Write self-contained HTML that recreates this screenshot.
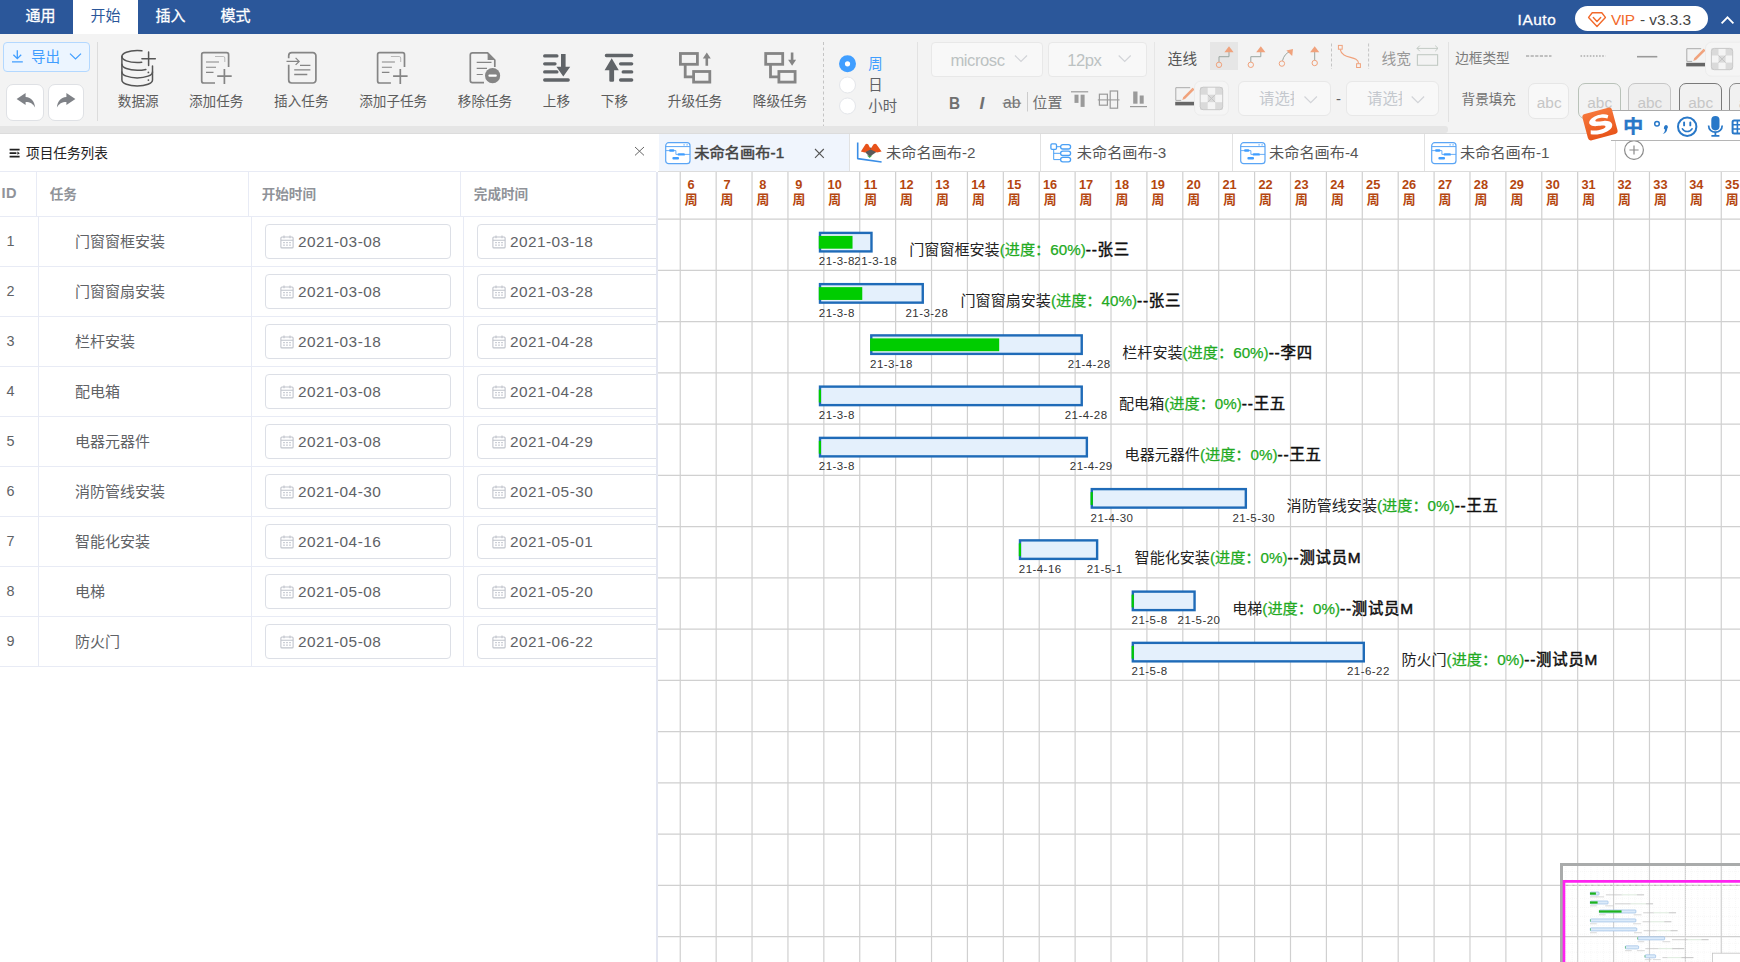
<!DOCTYPE html>
<html lang="zh-CN"><head><meta charset="utf-8"><title>IAuto</title><style>
*{box-sizing:border-box;margin:0;padding:0}
html,body{width:1740px;height:962px;overflow:hidden;background:#fff}
body{font-family:"Liberation Sans","Noto Sans CJK SC",sans-serif;color:#333;position:relative;font-size:14px}
.abs{position:absolute}
.t{position:absolute;white-space:nowrap;line-height:1}
#topbar{position:absolute;left:0;top:0;width:1740px;height:34px;background:#2b579a}
#topbar .tab{position:absolute;top:0;height:34px;width:65px;text-align:center;line-height:32px;color:#fff;font-size:15px;-webkit-text-stroke:.3px #fff}
#topbar .tab.on{background:#fff;color:#2b579a;-webkit-text-stroke:0}
#toolbar{position:absolute;left:0;top:34px;width:1740px;height:92px;background:#f3f3f3}
#hscroll{position:absolute;left:0;top:126px;width:1740px;height:8px;background:#f3f3f3;border-bottom:1px solid #dcdcdc}
#hscroll i{position:absolute;left:0;top:0;width:1448px;height:6.8px;background:#e5e5e5;border-radius:0 3px 3px 0}
.lbl{position:absolute;white-space:nowrap;font-size:13.6px;color:#5c5c5c;line-height:16px;text-align:center;transform:translateX(-50%)}
.vdiv{position:absolute;width:1px;background:#dcdcdc}
.sel{position:absolute;background:#f8f8f8;border:1px solid #e8e8e8;border-radius:4px;color:#c0c4cc;overflow:hidden}
#left{position:absolute;left:0;top:134px;width:656.4px;height:828px;background:#fff;overflow:hidden}
#canvas{position:absolute;left:658px;top:172px;width:1082px;height:790px;background:#fff;overflow:hidden}
#tabs{position:absolute;left:658px;top:134px;width:1082px;height:38px;background:#fff;border-bottom:1px solid #dcdcdc}
.ctab{position:absolute;top:0;height:37px;border-right:1px solid #e2e2e2;font-size:15px;color:#555}
.hdr{position:absolute;font-weight:bold;color:#909399;font-size:13.6px;white-space:nowrap;line-height:16px}
.cell{position:absolute;font-size:14.6px;color:#606266;white-space:nowrap;line-height:18px}
.inp{position:absolute;height:35px;border:1px solid #dcdfe6;border-radius:4px;background:#fff}
.inp span{position:absolute;left:32px;top:7.5px;font-size:15.4px;color:#606266;line-height:18px;white-space:nowrap;letter-spacing:.45px}
</style></head>
<body>
<div id="topbar">
<div class="tab" style="left:8px">通用</div>
<div class="tab on" style="left:73px">开始</div>
<div class="tab" style="left:138px">插入</div>
<div class="tab" style="left:203px">模式</div>
<div class="t" style="left:1517.6px;top:11.6px;font-size:15.4px;color:#fff;letter-spacing:.55px;-webkit-text-stroke:.3px #fff">IAuto</div>
<div class="abs" style="left:1575px;top:6px;width:133px;height:25px;border-radius:13px;background:#fff"></div>
<svg class="abs" style="left:1587px;top:11px" width="20" height="17" viewBox="0 0 20 17" ><path d="M5.2 1.8h9.6l3.6 4.6L10 15.4 1.6 6.4z" fill="none" stroke="#f2692a" stroke-width="1.4" stroke-linejoin="round"/><path d="M6.3 6.6L10 10.6l3.7-4" fill="none" stroke="#f2692a" stroke-width="1.4" stroke-linecap="round" stroke-linejoin="round"/></svg>
<div class="t" style="left:1611px;top:11.8px;font-size:15.4px;color:#f2692a;letter-spacing:-.4px">VIP</div>
<div class="t" style="left:1640px;top:11.8px;font-size:15.4px;color:#444;letter-spacing:-.05px">- v3.3.3</div>
<svg class="abs" style="left:1719px;top:14px" width="17" height="12" viewBox="0 0 17 12" ><path d="M2.6 9.3L8.5 3.3l5.9 6" fill="none" stroke="#fff" stroke-width="1.8"/></svg>
</div>
<div id="toolbar"></div><div id="hscroll"><i></i></div>
<div class="abs" style="left:3px;top:42px;width:87px;height:30px;background:#ecf5ff;border:1px solid #b3d8ff;border-radius:4px"></div>
<svg class="abs" style="left:10px;top:48px" width="15" height="16" viewBox="0 0 15 16" ><path d="M7.3 2.2V10.2M3.4 6.8l3.9 3.9 3.9-3.9M2 13.9H12.8" fill="none" stroke="#409eff" stroke-width="1.3"/></svg>
<div class="t" style="left:31px;top:49.8px;font-size:14.6px;color:#409eff">导出</div>
<svg class="abs" style="left:68px;top:51px" width="15" height="10" viewBox="0 0 15 10" ><path d="M2 2.6L7.5 8 13 2.6" fill="none" stroke="#409eff" stroke-width="1.2"/></svg>
<div class="abs" style="left:6px;top:84px;width:37.6px;height:36.6px;background:#fff;border:1px solid #dfe1e5;border-radius:7px"></div>
<div class="abs" style="left:48px;top:84px;width:36.4px;height:36.6px;background:#fff;border:1px solid #dfe1e5;border-radius:7px"></div>
<svg class="abs" style="left:16px;top:92px" width="20" height="17" viewBox="0 0 20 17" ><path d="M.6 7L9.6 1V4.9C15.5 5.2 18.6 9.6 19.1 15.6C17 11.8 14.2 10 9.6 10V13.1z" fill="#7f8287"/></svg>
<svg class="abs" style="left:56.4px;top:92px" width="20" height="17" viewBox="0 0 20 17" ><g transform="translate(20,0) scale(-1,1)"><path d="M.6 7L9.6 1V4.9C15.5 5.2 18.6 9.6 19.1 15.6C17 11.8 14.2 10 9.6 10V13.1z" fill="#7f8287"/></g></svg>
<div class="vdiv" style="left:97px;top:42px;height:79px"></div>
<svg class="abs" style="left:0px;top:34px" width="1740" height="92" viewBox="0 34 1740 92" ><g transform="translate(.9,.6)"><g fill="none" stroke="#555" stroke-width="1.5" stroke-linecap="round"><path d="M141 50.2Q138.8 49.9 136.3 49.9C127.8 49.9 121 52.5 121 55.9S127.8 62 136.3 62Q138.5 62 140.8 61.7"/><path d="M121 55.9V79.4C121 82.8 127.8 85.4 136.3 85.4S151.6 82.8 151.6 79.4V65.5"/><path d="M121 63.6C121 67 127.8 69.7 136.3 69.7Q141 69.7 145 68.8"/><path d="M121 71.3C121 74.7 127.8 77.3 136.3 77.3S151.6 74.7 151.6 71.3"/><path d="M141 58.2H154.4M147.7 51.5V64.9"/></g><circle cx="147.5" cy="71.8" r=".9" fill="#555"/><circle cx="147.5" cy="79.5" r=".9" fill="#555"/></g><path d="M215 83H203.7a2 2 0 0 1-2-2V54.7a2 2 0 0 1 2-2H226.6a2 2 0 0 1 2 2V67" fill="none" stroke="#858585" stroke-width="1.7"/><path d="M206 62H219M206 67.2H216M206 72.4H213.5" stroke="#858585" stroke-width="1.1"/><path d="M215 56.5H223.3a1.5 1.5 0 0 1 1.5 1.5V62" fill="none" stroke="#aaa" stroke-width=".8"/><path d="M217.2 76.2H231.7M224.4 69V83.9" stroke="#858585" stroke-width="1.7"/><path d="M288.7 58.3V55.7a3 3 0 0 1 3-3H312.9a3 3 0 0 1 3 3V80a3 3 0 0 1-3 3H291.7a3 3 0 0 1-3-3V64.8" fill="none" stroke="#858585" stroke-width="1.7"/><path d="M286.5 61.4H299M295.6 57.9l3.6 3.5-3.6 3.5" fill="none" stroke="#858585" stroke-width="1.2"/><path d="M300 65.3H310.4M294.2 69.8H310.4M294.2 74.5H307.3" stroke="#858585" stroke-width="1.3"/><path d="M390.9 83H379.6a2 2 0 0 1-2-2V54.7a2 2 0 0 1 2-2H402.5a2 2 0 0 1 2 2V67" fill="none" stroke="#858585" stroke-width="1.7"/><path d="M381.9 62H394.9M381.9 67.2H391.9M381.9 72.4H389.4" stroke="#858585" stroke-width="1.1"/><path d="M390.9 56.5H399.20000000000005a1.5 1.5 0 0 1 1.5 1.5V62" fill="none" stroke="#aaa" stroke-width=".8"/><path d="M393.1 76.2H407.6M400.3 69V83.9" stroke="#858585" stroke-width="1.7"/><path d="M484 82.6H472.5a2.2 2.2 0 0 1-2.2-2.2V55.1a2.2 2.2 0 0 1 2.2-2.2H487.6L494.8 60V67" fill="none" stroke="#858585" stroke-width="1.7" stroke-linejoin="round"/><path d="M487.6 52.9V60H494.8z" fill="#858585"/><path d="M476.7 62.4H491.5M476.7 68.4H487M476.7 74.5H482.8" stroke="#858585" stroke-width="1.2"/><circle cx="492.6" cy="75.7" r="7.6" fill="#858585"/><rect x="488.4" y="74.6" width="8.4" height="2.2" rx="1" fill="#fff"/><path d="M544.7 55.9H556.9M544.7 63.8H555M544.7 71.9H556.9M544.7 80H568.2" stroke="#606468" stroke-width="3.3" stroke-linecap="round"/><path d="M561 54.1h4.6V66.7h4.6L563.3 76.6 556.4 66.7H561z" fill="#606468"/><path d="M606.4 55.5H631.7M620.6 63.8H631.7M623.2 71.9H631.7M620.6 80H631.7" stroke="#606468" stroke-width="3.3" stroke-linecap="round"/><path d="M611.7 58.2L618.8 70.2H614.1V80.4a1.3 1.3 0 0 1-1.3 1.3h-2.2a1.3 1.3 0 0 1-1.3-1.3V70.2H604.6z" fill="#606468"/><g transform="translate(0,0)" fill="none" stroke="#858585" stroke-width="2.8"><rect x="680.4" y="53.5" width="17" height="10.8"/><rect x="693.6" y="71.5" width="16.2" height="10.6"/><path d="M685.2 64.3V76.9H693.6"/></g><path d="M706.8 52.4l4 6h-2.7V65.7h-2.6V58.4h-2.7z" fill="#858585"/><g transform="translate(85.3,0)" fill="none" stroke="#858585" stroke-width="2.8"><rect x="680.4" y="53.5" width="17" height="10.8"/><rect x="693.6" y="71.5" width="16.2" height="10.6"/><path d="M685.2 64.3V76.9H693.6"/></g><path d="M792.0999999999999 65.7l4-6h-2.7V52.4h-2.6V59.7h-2.7z" fill="#858585"/><path d="M823.5 42V126" stroke="#c4c4c4" stroke-width="1" stroke-dasharray="3 2.5"/><circle cx="847.5" cy="63.8" r="8.5" fill="#409eff"/><circle cx="847.5" cy="63.8" r="2.6" fill="#fff"/><circle cx="847.5" cy="85" r="8" fill="#fff" stroke="#e4e6ea" stroke-width="1"/><circle cx="847.5" cy="106" r="8" fill="#fff" stroke="#e4e6ea" stroke-width="1"/><path d="M1002.6 103.2H1021.2" stroke="#777" stroke-width="1"/><path d="M1027.5 92V111.5" stroke="#ccc" stroke-width="1"/><path d="M1071 91.8H1088.2" stroke="#9a9a9a" stroke-width="1.2"/><rect x="1074.5" y="94.7" width="4" height="8.2" fill="#9a9a9a"/><rect x="1080.6" y="94.7" width="4" height="12.2" fill="#9a9a9a"/><path d="M1097.8 99.9H1119.5" stroke="#9a9a9a" stroke-width="1.1"/><rect x="1099.4" y="94.2" width="8" height="11" fill="none" stroke="#9a9a9a" stroke-width="1.2"/><rect x="1110.2" y="91" width="7.4" height="17.2" fill="none" stroke="#9a9a9a" stroke-width="1.2"/><path d="M1130 106.6H1147" stroke="#9a9a9a" stroke-width="1.2"/><rect x="1133.2" y="91.5" width="4.3" height="12.2" fill="#9a9a9a"/><rect x="1139.7" y="95.5" width="4" height="8.2" fill="#9a9a9a"/><rect x="1210" y="42" width="28" height="28" fill="#e6e6e6"/><path d="M1219 62V56.7H1229V52" fill="none" stroke="#9aa5a0" stroke-width="1"/><circle cx="1219" cy="64.8" r="2.7" fill="none" stroke="#f0a27c" stroke-width="1"/><path d="M1229 46.3l4.6 5.9h-9.2z" fill="#f0a27c"/><path d="M1250.8 62V56.7H1260.8V52" fill="none" stroke="#9aa5a0" stroke-width="1"/><circle cx="1250.8" cy="64.8" r="2.7" fill="none" stroke="#f0a27c" stroke-width="1"/><path d="M1260.8 46.3l4.6 5.9h-9.2z" fill="#f0a27c"/><path d="M1282.5 60.8Q1284 54 1290 51.5" fill="none" stroke="#9aa5a0" stroke-width="1"/><circle cx="1281.9" cy="63.6" r="2.7" fill="none" stroke="#f0a27c" stroke-width="1"/><path d="M1293 48.9l-.8 7.2-5.8-5.5z" fill="#f0a27c"/><path d="M1314.7 60.3V52" stroke="#9aa5a0" stroke-width="1"/><circle cx="1314.7" cy="63" r="2.7" fill="none" stroke="#f0a27c" stroke-width="1"/><path d="M1314.7 46.3l4.6 5.9h-9.2z" fill="#f0a27c"/><path d="M1331.5 43.5V69" stroke="#c4c4c4" stroke-width="1" stroke-dasharray="3 2"/><path d="M1368.6 43.5V69" stroke="#c4c4c4" stroke-width="1" stroke-dasharray="3 2"/><path d="M1340.2 49.4C1342 60 1358 55 1358.6 63.5" fill="none" stroke="#f0a27c" stroke-width="1.1"/><rect x="1338.4" y="45.4" width="3.8" height="3.8" fill="#f3f3f3" stroke="#f0a27c" stroke-width="1"/><rect x="1356.6" y="63.7" width="3.8" height="3.8" fill="#f3f3f3" stroke="#f0a27c" stroke-width="1"/><path d="M1417 48.4H1438M1419.8 45.6l-2.8 2.8 2.8 2.8M1435.2 45.6l2.8 2.8-2.8 2.8" fill="none" stroke="#c2cac4" stroke-width="1"/><rect x="1417.4" y="54.7" width="20.2" height="10.6" fill="none" stroke="#c2cac4" stroke-width="1.1"/><path d="M1526 56H1551.5" stroke="#8a8a8a" stroke-width="1" stroke-dasharray="3.2 1.4"/><path d="M1580.5 56H1605.5" stroke="#8a8a8a" stroke-width="1.2" stroke-dasharray="1.6 1.5"/><path d="M1637 56.7H1657.3" stroke="#9a9a9a" stroke-width="1.6"/><g transform="translate(1175.2,87.2)"><path d="M15 .5H.6V13.2H6" fill="none" stroke="#aaa" stroke-width="1"/><rect x="0" y="14.6" width="19" height="3.6" fill="#666"/><path d="M8.6 11.2L17.6 2.2" stroke="#f0a27c" stroke-width="2.6"/><path d="M7 12.8l1-2.4 1.5 1.5z" fill="#f0a27c"/><path d="M17 .9l1.9 1.9" stroke="#f0a27c" stroke-width="1.2"/></g><g transform="translate(1686.2,48.2)"><path d="M15 .5H.6V13.2H6" fill="none" stroke="#aaa" stroke-width="1"/><rect x="0" y="14.6" width="19" height="3.6" fill="#666"/><path d="M8.6 11.2L17.6 2.2" stroke="#f0a27c" stroke-width="2.6"/><path d="M7 12.8l1-2.4 1.5 1.5z" fill="#f0a27c"/><path d="M17 .9l1.9 1.9" stroke="#f0a27c" stroke-width="1.2"/></g><rect x="1194.5" y="81.2" width="34" height="34" rx="6" fill="#f5f5f5" stroke="#ececec"/><g transform="translate(1200.2,87.2)"><rect x="0" y="0" width="22.5" height="22.5" rx="3" fill="#f4f4f4"/><rect x="0.00" y="0.00" width="7.50" height="7.50" fill="#dadada"/><rect x="0.00" y="15.00" width="7.50" height="7.50" fill="#dadada"/><rect x="7.50" y="7.50" width="7.50" height="7.50" fill="#dadada"/><rect x="15.00" y="0.00" width="7.50" height="7.50" fill="#dadada"/><rect x="15.00" y="15.00" width="7.50" height="7.50" fill="#dadada"/><path d="M7.5 7.5L15.0 15.0M15.0 7.5L7.5 15.0" stroke="#c4c4c4" stroke-width="1"/><rect x="0" y="0" width="22.5" height="22.5" rx="3" fill="none" stroke="#c8c8c8" stroke-width="1"/></g><rect x="1705.5" y="42.2" width="40" height="34" rx="6" fill="#f5f5f5" stroke="#ececec"/><g transform="translate(1711.4,48.4)"><rect x="0" y="0" width="21.3" height="21.3" rx="3" fill="#f4f4f4"/><rect x="0.00" y="0.00" width="7.10" height="7.10" fill="#dadada"/><rect x="0.00" y="14.20" width="7.10" height="7.10" fill="#dadada"/><rect x="7.10" y="7.10" width="7.10" height="7.10" fill="#dadada"/><rect x="14.20" y="0.00" width="7.10" height="7.10" fill="#dadada"/><rect x="14.20" y="14.20" width="7.10" height="7.10" fill="#dadada"/><path d="M7.1000000000000005 7.1000000000000005L14.200000000000001 14.200000000000001M14.200000000000001 7.1000000000000005L7.1000000000000005 14.200000000000001" stroke="#c4c4c4" stroke-width="1"/><rect x="0" y="0" width="21.3" height="21.3" rx="3" fill="none" stroke="#c8c8c8" stroke-width="1"/></g></svg>
<div class="lbl" style="left:138.2px;top:93.9px">数据源</div>
<div class="lbl" style="left:216.2px;top:93.9px">添加任务</div>
<div class="lbl" style="left:301.3px;top:93.9px">插入任务</div>
<div class="lbl" style="left:393.2px;top:93.9px">添加子任务</div>
<div class="lbl" style="left:485px;top:93.9px">移除任务</div>
<div class="lbl" style="left:556.4px;top:93.9px">上移</div>
<div class="lbl" style="left:614.4px;top:93.9px">下移</div>
<div class="lbl" style="left:695px;top:93.9px">升级任务</div>
<div class="lbl" style="left:780px;top:93.9px">降级任务</div>
<div class="t" style="left:868.3px;top:56.5px;font-size:14.4px;color:#409eff">周</div>
<div class="t" style="left:868.3px;top:77.7px;font-size:14.4px;color:#606266">日</div>
<div class="t" style="left:868.3px;top:98.7px;font-size:14.4px;color:#606266">小时</div>
<div class="vdiv" style="left:917px;top:42px;height:84px;background:#e2e2e2"></div>
<div class="sel" style="left:930.5px;top:42.4px;width:112px;height:35px"><span class="t" style="left:19px;top:9.2px;font-size:16.6px;letter-spacing:-.45px;color:#bcc2c2">microsc</span></div>
<div class="sel" style="left:1047.6px;top:42.4px;width:99px;height:35px"><span class="t" style="left:18.6px;top:9.2px;font-size:16.6px;letter-spacing:-.45px;color:#bcc2c2">12px</span></div>
<div class="t" style="left:949.3px;top:94.6px;font-size:17.4px;font-weight:bold;color:#707070;transform:scaleX(.88);transform-origin:0 0">B</div>
<div class="t" style="left:979.4px;top:94.6px;font-size:17.4px;font-weight:bold;font-style:italic;color:#707070">I</div>
<div class="t" style="left:1003px;top:95.2px;font-size:15.6px;color:#777">ab</div>
<div class="t" style="left:1032.6px;top:96.2px;font-size:14.9px;color:#707070">位置</div>
<div class="vdiv" style="left:1154px;top:42px;height:84px;background:#e6e6e6"></div>
<div class="t" style="left:1167.8px;top:52.1px;font-size:14.6px;color:#555">连线</div>
<div class="t" style="left:1381.5px;top:52.4px;font-size:14.7px;color:#999">线宽</div>
<div class="vdiv" style="left:1448px;top:42px;height:80px;background:#e2e2e2"></div>
<div class="t" style="left:1455.2px;top:52px;font-size:13.65px;color:#7c7c7c">边框类型</div>
<div class="t" style="left:1461.6px;top:93.4px;font-size:13.6px;color:#707070">背景填充</div>
<div class="sel" style="left:1238.4px;top:81.2px;width:92.4px;height:34.4px;border-radius:6px"><span class="t" style="left:19.6px;top:9px;font-size:15.4px;color:#c4c8ce;width:34.6px;overflow:hidden;display:block">请选择</span></div>
<div class="t" style="left:1336px;top:90.5px;font-size:15px;color:#606266">-</div>
<div class="sel" style="left:1346.2px;top:81.2px;width:93px;height:34.4px;border-radius:6px"><span class="t" style="left:19.8px;top:9px;font-size:15.4px;color:#c4c8ce;width:34.6px;overflow:hidden;display:block">请选择</span></div>
<div class="abs" style="left:1528.3px;top:83.3px;width:41px;height:36px;border:1px solid #e6e6e6;border-radius:7px;background:#f8f8f8"><span class="t" style="left:7.5px;top:10.5px;font-size:15.4px;color:#c6c6c6">abc</span></div>
<div class="abs" style="left:1577.9px;top:83.3px;width:42.8px;height:36px;border:1px solid #b9c2b9;border-radius:7px;background:#f3f3f3"><span class="t" style="left:8.4px;top:10.5px;font-size:15.4px;color:#c6c6c6">abc</span></div>
<div class="abs" style="left:1628.3px;top:83.3px;width:42.4px;height:36px;border:1px solid #c6c6c6;border-radius:7px;background:#efefef"><span class="t" style="left:8.2px;top:10.5px;font-size:15.4px;color:#c6c6c6">abc</span></div>
<div class="abs" style="left:1678.8px;top:83.3px;width:43px;height:36px;border:1px solid #7a7a7a;border-radius:7px;background:#f1f1f1"><span class="t" style="left:8.5px;top:10.5px;font-size:15.4px;color:#c6c6c6">abc</span></div>
<div class="abs" style="left:1729.3px;top:83.3px;width:43px;height:36px;border:1px solid #8a8a8a;border-radius:7px;background:#f1f1f1"><span class="t" style="left:8.5px;top:10.5px;font-size:15.4px;color:#c6c6c6">abc</span></div>
<svg class="abs" style="left:0px;top:34px" width="1740" height="92" viewBox="0 34 1740 92" ><path d="M1015 55.5L1021 61.5L1027 55.5" fill="none" stroke="#d2d4d8" stroke-width="1.2"/><path d="M1118.7 55.5L1124.7 61.5L1130.7 55.5" fill="none" stroke="#d2d4d8" stroke-width="1.2"/><path d="M1304.5 96.5L1310.7 102.7L1316.9 96.5" fill="none" stroke="#d2d4d8" stroke-width="1.2"/><path d="M1411.7 96.5L1417.9 102.7L1424.1000000000001 96.5" fill="none" stroke="#d2d4d8" stroke-width="1.2"/></svg>
<div id="left">
<svg class="abs" style="left:8.6px;top:13.599999999999994px" width="12" height="10" viewBox="0 0 12 10" ><path d="M.6 1.7H10.6M.6 5.2H7.4M.6 8.7H10.6" stroke="#222" stroke-width="1.7"/><path d="M8.4 3.6l2.4 1.6-2.4 1.6z" fill="#222"/></svg>
<div class="t" style="left:26px;top:13px;font-size:13.65px;color:#222">项目任务列表</div>
<svg class="abs" style="left:634px;top:11.800000000000011px" width="11" height="11" viewBox="0 0 11 11" ><path d="M1 1l9 8.4M10 1L1 9.4" stroke="#666" stroke-width="1"/></svg>
<div class="abs" style="left:0;top:37px;width:657px;height:1px;background:#e8ebf5"></div>
<div class="abs" style="left:0;top:82px;width:657px;height:1px;background:#e8ebf5"></div>
<div class="abs" style="left:36px;top:37px;width:1px;height:45px;background:#e8ebf5"></div>
<div class="abs" style="left:248px;top:37px;width:1px;height:45px;background:#e8ebf5"></div>
<div class="abs" style="left:460px;top:37px;width:1px;height:45px;background:#e8ebf5"></div>
<div class="hdr" style="left:1.5px;top:51.4px;font-size:14.6px;letter-spacing:.5px;">ID</div>
<div class="hdr" style="left:49.7px;top:53.0px;">任务</div>
<div class="hdr" style="left:261.7px;top:53.0px;">开始时间</div>
<div class="hdr" style="left:473.8px;top:53.0px;">完成时间</div>
<div class="abs" style="left:0;top:132px;width:657px;height:1px;background:#e8ebf5"></div>
<div class="abs" style="left:38px;top:83px;width:1px;height:49px;background:#e8ebf5"></div>
<div class="abs" style="left:251px;top:83px;width:1px;height:49px;background:#e8ebf5"></div>
<div class="abs" style="left:463px;top:83px;width:1px;height:49px;background:#e8ebf5"></div>
<div class="cell" style="left:6.6px;top:97.6px;font-size:14.4px">1</div>
<div class="cell" style="left:74.9px;top:99px;font-size:15px">门窗窗框安装</div>
<div class="inp" style="left:265px;top:90px;width:186px"><svg class="abs" style="left:14.4px;top:10px" width="14" height="14" viewBox="0 0 14 14" ><rect x=".9" y="2" width="12.2" height="10.9" rx="1" fill="none" stroke="#c0c4cc" stroke-width="1.1"/><path d="M.9 5.3H13.1M4 .6V3.2M10 .6V3.2" stroke="#c0c4cc" stroke-width="1.1"/><path d="M3.2 7.6H10.8M3.2 10.1H10.8" stroke="#c0c4cc" stroke-width="1.1" stroke-dasharray="1.6 1.4"/></svg><span>2021-03-08</span></div>
<div class="inp" style="left:477px;top:90px;width:186px"><svg class="abs" style="left:14.4px;top:10px" width="14" height="14" viewBox="0 0 14 14" ><rect x=".9" y="2" width="12.2" height="10.9" rx="1" fill="none" stroke="#c0c4cc" stroke-width="1.1"/><path d="M.9 5.3H13.1M4 .6V3.2M10 .6V3.2" stroke="#c0c4cc" stroke-width="1.1"/><path d="M3.2 7.6H10.8M3.2 10.1H10.8" stroke="#c0c4cc" stroke-width="1.1" stroke-dasharray="1.6 1.4"/></svg><span>2021-03-18</span></div>
<div class="abs" style="left:0;top:182px;width:657px;height:1px;background:#e8ebf5"></div>
<div class="abs" style="left:38px;top:133px;width:1px;height:49px;background:#e8ebf5"></div>
<div class="abs" style="left:251px;top:133px;width:1px;height:49px;background:#e8ebf5"></div>
<div class="abs" style="left:463px;top:133px;width:1px;height:49px;background:#e8ebf5"></div>
<div class="cell" style="left:6.6px;top:147.6px;font-size:14.4px">2</div>
<div class="cell" style="left:74.9px;top:149px;font-size:15px">门窗窗扇安装</div>
<div class="inp" style="left:265px;top:140px;width:186px"><svg class="abs" style="left:14.4px;top:10px" width="14" height="14" viewBox="0 0 14 14" ><rect x=".9" y="2" width="12.2" height="10.9" rx="1" fill="none" stroke="#c0c4cc" stroke-width="1.1"/><path d="M.9 5.3H13.1M4 .6V3.2M10 .6V3.2" stroke="#c0c4cc" stroke-width="1.1"/><path d="M3.2 7.6H10.8M3.2 10.1H10.8" stroke="#c0c4cc" stroke-width="1.1" stroke-dasharray="1.6 1.4"/></svg><span>2021-03-08</span></div>
<div class="inp" style="left:477px;top:140px;width:186px"><svg class="abs" style="left:14.4px;top:10px" width="14" height="14" viewBox="0 0 14 14" ><rect x=".9" y="2" width="12.2" height="10.9" rx="1" fill="none" stroke="#c0c4cc" stroke-width="1.1"/><path d="M.9 5.3H13.1M4 .6V3.2M10 .6V3.2" stroke="#c0c4cc" stroke-width="1.1"/><path d="M3.2 7.6H10.8M3.2 10.1H10.8" stroke="#c0c4cc" stroke-width="1.1" stroke-dasharray="1.6 1.4"/></svg><span>2021-03-28</span></div>
<div class="abs" style="left:0;top:232px;width:657px;height:1px;background:#e8ebf5"></div>
<div class="abs" style="left:38px;top:183px;width:1px;height:49px;background:#e8ebf5"></div>
<div class="abs" style="left:251px;top:183px;width:1px;height:49px;background:#e8ebf5"></div>
<div class="abs" style="left:463px;top:183px;width:1px;height:49px;background:#e8ebf5"></div>
<div class="cell" style="left:6.6px;top:197.6px;font-size:14.4px">3</div>
<div class="cell" style="left:74.9px;top:199px;font-size:15px">栏杆安装</div>
<div class="inp" style="left:265px;top:190px;width:186px"><svg class="abs" style="left:14.4px;top:10px" width="14" height="14" viewBox="0 0 14 14" ><rect x=".9" y="2" width="12.2" height="10.9" rx="1" fill="none" stroke="#c0c4cc" stroke-width="1.1"/><path d="M.9 5.3H13.1M4 .6V3.2M10 .6V3.2" stroke="#c0c4cc" stroke-width="1.1"/><path d="M3.2 7.6H10.8M3.2 10.1H10.8" stroke="#c0c4cc" stroke-width="1.1" stroke-dasharray="1.6 1.4"/></svg><span>2021-03-18</span></div>
<div class="inp" style="left:477px;top:190px;width:186px"><svg class="abs" style="left:14.4px;top:10px" width="14" height="14" viewBox="0 0 14 14" ><rect x=".9" y="2" width="12.2" height="10.9" rx="1" fill="none" stroke="#c0c4cc" stroke-width="1.1"/><path d="M.9 5.3H13.1M4 .6V3.2M10 .6V3.2" stroke="#c0c4cc" stroke-width="1.1"/><path d="M3.2 7.6H10.8M3.2 10.1H10.8" stroke="#c0c4cc" stroke-width="1.1" stroke-dasharray="1.6 1.4"/></svg><span>2021-04-28</span></div>
<div class="abs" style="left:0;top:282px;width:657px;height:1px;background:#e8ebf5"></div>
<div class="abs" style="left:38px;top:233px;width:1px;height:49px;background:#e8ebf5"></div>
<div class="abs" style="left:251px;top:233px;width:1px;height:49px;background:#e8ebf5"></div>
<div class="abs" style="left:463px;top:233px;width:1px;height:49px;background:#e8ebf5"></div>
<div class="cell" style="left:6.6px;top:247.6px;font-size:14.4px">4</div>
<div class="cell" style="left:74.9px;top:249px;font-size:15px">配电箱</div>
<div class="inp" style="left:265px;top:240px;width:186px"><svg class="abs" style="left:14.4px;top:10px" width="14" height="14" viewBox="0 0 14 14" ><rect x=".9" y="2" width="12.2" height="10.9" rx="1" fill="none" stroke="#c0c4cc" stroke-width="1.1"/><path d="M.9 5.3H13.1M4 .6V3.2M10 .6V3.2" stroke="#c0c4cc" stroke-width="1.1"/><path d="M3.2 7.6H10.8M3.2 10.1H10.8" stroke="#c0c4cc" stroke-width="1.1" stroke-dasharray="1.6 1.4"/></svg><span>2021-03-08</span></div>
<div class="inp" style="left:477px;top:240px;width:186px"><svg class="abs" style="left:14.4px;top:10px" width="14" height="14" viewBox="0 0 14 14" ><rect x=".9" y="2" width="12.2" height="10.9" rx="1" fill="none" stroke="#c0c4cc" stroke-width="1.1"/><path d="M.9 5.3H13.1M4 .6V3.2M10 .6V3.2" stroke="#c0c4cc" stroke-width="1.1"/><path d="M3.2 7.6H10.8M3.2 10.1H10.8" stroke="#c0c4cc" stroke-width="1.1" stroke-dasharray="1.6 1.4"/></svg><span>2021-04-28</span></div>
<div class="abs" style="left:0;top:332px;width:657px;height:1px;background:#e8ebf5"></div>
<div class="abs" style="left:38px;top:283px;width:1px;height:49px;background:#e8ebf5"></div>
<div class="abs" style="left:251px;top:283px;width:1px;height:49px;background:#e8ebf5"></div>
<div class="abs" style="left:463px;top:283px;width:1px;height:49px;background:#e8ebf5"></div>
<div class="cell" style="left:6.6px;top:297.6px;font-size:14.4px">5</div>
<div class="cell" style="left:74.9px;top:299px;font-size:15px">电器元器件</div>
<div class="inp" style="left:265px;top:290px;width:186px"><svg class="abs" style="left:14.4px;top:10px" width="14" height="14" viewBox="0 0 14 14" ><rect x=".9" y="2" width="12.2" height="10.9" rx="1" fill="none" stroke="#c0c4cc" stroke-width="1.1"/><path d="M.9 5.3H13.1M4 .6V3.2M10 .6V3.2" stroke="#c0c4cc" stroke-width="1.1"/><path d="M3.2 7.6H10.8M3.2 10.1H10.8" stroke="#c0c4cc" stroke-width="1.1" stroke-dasharray="1.6 1.4"/></svg><span>2021-03-08</span></div>
<div class="inp" style="left:477px;top:290px;width:186px"><svg class="abs" style="left:14.4px;top:10px" width="14" height="14" viewBox="0 0 14 14" ><rect x=".9" y="2" width="12.2" height="10.9" rx="1" fill="none" stroke="#c0c4cc" stroke-width="1.1"/><path d="M.9 5.3H13.1M4 .6V3.2M10 .6V3.2" stroke="#c0c4cc" stroke-width="1.1"/><path d="M3.2 7.6H10.8M3.2 10.1H10.8" stroke="#c0c4cc" stroke-width="1.1" stroke-dasharray="1.6 1.4"/></svg><span>2021-04-29</span></div>
<div class="abs" style="left:0;top:382px;width:657px;height:1px;background:#e8ebf5"></div>
<div class="abs" style="left:38px;top:333px;width:1px;height:49px;background:#e8ebf5"></div>
<div class="abs" style="left:251px;top:333px;width:1px;height:49px;background:#e8ebf5"></div>
<div class="abs" style="left:463px;top:333px;width:1px;height:49px;background:#e8ebf5"></div>
<div class="cell" style="left:6.6px;top:347.6px;font-size:14.4px">6</div>
<div class="cell" style="left:74.9px;top:349px;font-size:15px">消防管线安装</div>
<div class="inp" style="left:265px;top:340px;width:186px"><svg class="abs" style="left:14.4px;top:10px" width="14" height="14" viewBox="0 0 14 14" ><rect x=".9" y="2" width="12.2" height="10.9" rx="1" fill="none" stroke="#c0c4cc" stroke-width="1.1"/><path d="M.9 5.3H13.1M4 .6V3.2M10 .6V3.2" stroke="#c0c4cc" stroke-width="1.1"/><path d="M3.2 7.6H10.8M3.2 10.1H10.8" stroke="#c0c4cc" stroke-width="1.1" stroke-dasharray="1.6 1.4"/></svg><span>2021-04-30</span></div>
<div class="inp" style="left:477px;top:340px;width:186px"><svg class="abs" style="left:14.4px;top:10px" width="14" height="14" viewBox="0 0 14 14" ><rect x=".9" y="2" width="12.2" height="10.9" rx="1" fill="none" stroke="#c0c4cc" stroke-width="1.1"/><path d="M.9 5.3H13.1M4 .6V3.2M10 .6V3.2" stroke="#c0c4cc" stroke-width="1.1"/><path d="M3.2 7.6H10.8M3.2 10.1H10.8" stroke="#c0c4cc" stroke-width="1.1" stroke-dasharray="1.6 1.4"/></svg><span>2021-05-30</span></div>
<div class="abs" style="left:0;top:432px;width:657px;height:1px;background:#e8ebf5"></div>
<div class="abs" style="left:38px;top:383px;width:1px;height:49px;background:#e8ebf5"></div>
<div class="abs" style="left:251px;top:383px;width:1px;height:49px;background:#e8ebf5"></div>
<div class="abs" style="left:463px;top:383px;width:1px;height:49px;background:#e8ebf5"></div>
<div class="cell" style="left:6.6px;top:397.6px;font-size:14.4px">7</div>
<div class="cell" style="left:74.9px;top:399px;font-size:15px">智能化安装</div>
<div class="inp" style="left:265px;top:390px;width:186px"><svg class="abs" style="left:14.4px;top:10px" width="14" height="14" viewBox="0 0 14 14" ><rect x=".9" y="2" width="12.2" height="10.9" rx="1" fill="none" stroke="#c0c4cc" stroke-width="1.1"/><path d="M.9 5.3H13.1M4 .6V3.2M10 .6V3.2" stroke="#c0c4cc" stroke-width="1.1"/><path d="M3.2 7.6H10.8M3.2 10.1H10.8" stroke="#c0c4cc" stroke-width="1.1" stroke-dasharray="1.6 1.4"/></svg><span>2021-04-16</span></div>
<div class="inp" style="left:477px;top:390px;width:186px"><svg class="abs" style="left:14.4px;top:10px" width="14" height="14" viewBox="0 0 14 14" ><rect x=".9" y="2" width="12.2" height="10.9" rx="1" fill="none" stroke="#c0c4cc" stroke-width="1.1"/><path d="M.9 5.3H13.1M4 .6V3.2M10 .6V3.2" stroke="#c0c4cc" stroke-width="1.1"/><path d="M3.2 7.6H10.8M3.2 10.1H10.8" stroke="#c0c4cc" stroke-width="1.1" stroke-dasharray="1.6 1.4"/></svg><span>2021-05-01</span></div>
<div class="abs" style="left:0;top:482px;width:657px;height:1px;background:#e8ebf5"></div>
<div class="abs" style="left:38px;top:433px;width:1px;height:49px;background:#e8ebf5"></div>
<div class="abs" style="left:251px;top:433px;width:1px;height:49px;background:#e8ebf5"></div>
<div class="abs" style="left:463px;top:433px;width:1px;height:49px;background:#e8ebf5"></div>
<div class="cell" style="left:6.6px;top:447.6px;font-size:14.4px">8</div>
<div class="cell" style="left:74.9px;top:449px;font-size:15px">电梯</div>
<div class="inp" style="left:265px;top:440px;width:186px"><svg class="abs" style="left:14.4px;top:10px" width="14" height="14" viewBox="0 0 14 14" ><rect x=".9" y="2" width="12.2" height="10.9" rx="1" fill="none" stroke="#c0c4cc" stroke-width="1.1"/><path d="M.9 5.3H13.1M4 .6V3.2M10 .6V3.2" stroke="#c0c4cc" stroke-width="1.1"/><path d="M3.2 7.6H10.8M3.2 10.1H10.8" stroke="#c0c4cc" stroke-width="1.1" stroke-dasharray="1.6 1.4"/></svg><span>2021-05-08</span></div>
<div class="inp" style="left:477px;top:440px;width:186px"><svg class="abs" style="left:14.4px;top:10px" width="14" height="14" viewBox="0 0 14 14" ><rect x=".9" y="2" width="12.2" height="10.9" rx="1" fill="none" stroke="#c0c4cc" stroke-width="1.1"/><path d="M.9 5.3H13.1M4 .6V3.2M10 .6V3.2" stroke="#c0c4cc" stroke-width="1.1"/><path d="M3.2 7.6H10.8M3.2 10.1H10.8" stroke="#c0c4cc" stroke-width="1.1" stroke-dasharray="1.6 1.4"/></svg><span>2021-05-20</span></div>
<div class="abs" style="left:0;top:532px;width:657px;height:1px;background:#e8ebf5"></div>
<div class="abs" style="left:38px;top:483px;width:1px;height:49px;background:#e8ebf5"></div>
<div class="abs" style="left:251px;top:483px;width:1px;height:49px;background:#e8ebf5"></div>
<div class="abs" style="left:463px;top:483px;width:1px;height:49px;background:#e8ebf5"></div>
<div class="cell" style="left:6.6px;top:497.6px;font-size:14.4px">9</div>
<div class="cell" style="left:74.9px;top:499px;font-size:15px">防火门</div>
<div class="inp" style="left:265px;top:490px;width:186px"><svg class="abs" style="left:14.4px;top:10px" width="14" height="14" viewBox="0 0 14 14" ><rect x=".9" y="2" width="12.2" height="10.9" rx="1" fill="none" stroke="#c0c4cc" stroke-width="1.1"/><path d="M.9 5.3H13.1M4 .6V3.2M10 .6V3.2" stroke="#c0c4cc" stroke-width="1.1"/><path d="M3.2 7.6H10.8M3.2 10.1H10.8" stroke="#c0c4cc" stroke-width="1.1" stroke-dasharray="1.6 1.4"/></svg><span>2021-05-08</span></div>
<div class="inp" style="left:477px;top:490px;width:186px"><svg class="abs" style="left:14.4px;top:10px" width="14" height="14" viewBox="0 0 14 14" ><rect x=".9" y="2" width="12.2" height="10.9" rx="1" fill="none" stroke="#c0c4cc" stroke-width="1.1"/><path d="M.9 5.3H13.1M4 .6V3.2M10 .6V3.2" stroke="#c0c4cc" stroke-width="1.1"/><path d="M3.2 7.6H10.8M3.2 10.1H10.8" stroke="#c0c4cc" stroke-width="1.1" stroke-dasharray="1.6 1.4"/></svg><span>2021-06-22</span></div>
</div>
<div class="abs" style="left:656.4px;top:171.5px;width:2.4px;height:791px;background:#e3e6f1"></div>
<div id="tabs">
<div class="ctab" style="left:0.6px;width:191.2px;background:#f0f5fd;"></div>
<div class="ctab" style="left:191.8px;width:191.7px;"></div>
<div class="ctab" style="left:383.5px;width:191.7px;"></div>
<div class="ctab" style="left:575.2px;width:191.7px;"></div>
<div class="ctab" style="left:766.9px;width:191.2px;"></div>
<svg class="abs" style="left:7px;top:8.199999999999989px" width="26" height="23" viewBox="0 0 26 23" ><rect x=".7" y=".7" width="24.3" height="21" rx="3" fill="#fff" stroke="#5aa5f5" stroke-width="1.2"/><path d="M.7 4.6H25" stroke="#5aa5f5" stroke-width="1"/><path d="M18.4 2.9h1.4M21.4 2.9h1.4" stroke="#5aa5f5" stroke-width="1"/><rect x="4" y="7.3" width="5.4" height="2.5" rx="1.2" fill="#409eff"/><rect x="12.6" y="11.2" width="7.4" height="2.4" rx="1.2" fill="#409eff"/><rect x="7.4" y="15.1" width="6.6" height="2.4" rx="1" fill="#409eff"/><path d="M.7 8.6H4M9 8.6H10.9V12.4H13M20 12.4H25" fill="none" stroke="#5aa5f5" stroke-width=".9"/></svg>
<svg class="abs" style="left:582.3px;top:8.199999999999989px" width="26" height="23" viewBox="0 0 26 23" ><rect x=".7" y=".7" width="24.3" height="21" rx="3" fill="#fff" stroke="#5aa5f5" stroke-width="1.2"/><path d="M.7 4.6H25" stroke="#5aa5f5" stroke-width="1"/><path d="M18.4 2.9h1.4M21.4 2.9h1.4" stroke="#5aa5f5" stroke-width="1"/><rect x="4" y="7.3" width="5.4" height="2.5" rx="1.2" fill="#409eff"/><rect x="12.6" y="11.2" width="7.4" height="2.4" rx="1.2" fill="#409eff"/><rect x="7.4" y="15.1" width="6.6" height="2.4" rx="1" fill="#409eff"/><path d="M.7 8.6H4M9 8.6H10.9V12.4H13M20 12.4H25" fill="none" stroke="#5aa5f5" stroke-width=".9"/></svg>
<svg class="abs" style="left:773.3px;top:8.199999999999989px" width="26" height="23" viewBox="0 0 26 23" ><rect x=".7" y=".7" width="24.3" height="21" rx="3" fill="#fff" stroke="#5aa5f5" stroke-width="1.2"/><path d="M.7 4.6H25" stroke="#5aa5f5" stroke-width="1"/><path d="M18.4 2.9h1.4M21.4 2.9h1.4" stroke="#5aa5f5" stroke-width="1"/><rect x="4" y="7.3" width="5.4" height="2.5" rx="1.2" fill="#409eff"/><rect x="12.6" y="11.2" width="7.4" height="2.4" rx="1.2" fill="#409eff"/><rect x="7.4" y="15.1" width="6.6" height="2.4" rx="1" fill="#409eff"/><path d="M.7 8.6H4M9 8.6H10.9V12.4H13M20 12.4H25" fill="none" stroke="#5aa5f5" stroke-width=".9"/></svg>
<svg class="abs" style="left:198px;top:7px" width="28" height="23" viewBox="0 0 28 23" ><path d="M1.7 1.6V17.6L25.6 21" fill="none" stroke="#3a8ee6" stroke-width="1.6" stroke-linejoin="round"/><path d="M11 14.4l2.6 2.6 2.8-2.6z" fill="#3cb44b"/><path d="M8 10L14.6 6.6 21.8 10 13.7 15.8z" fill="#5a5a5a"/><path d="M4.9 10.4L9.5 3.2Q10.9 2.2 12.3 3.6L14.6 7.9 17.4 3.6Q18.9 2.2 20.4 3.2L25.6 10.4 21 11.4 14.6 8.6 8.6 11.4z" fill="#e8521a"/></svg>
<svg class="abs" style="left:391.5999999999999px;top:9px" width="22" height="20" viewBox="0 0 22 20" ><g fill="none" stroke="#4aa0f5" stroke-width="1.3"><rect x=".9" y=".9" width="5.6" height="5.4" rx="1.1"/><rect x="10.6" y="1.6" width="10" height="4.4" rx="2.2"/><rect x="10.6" y="8.1" width="10" height="4.4" rx="2.2"/><rect x="10.6" y="14.4" width="10" height="4.4" rx="2.2"/><path d="M3.7 6.3V16.6H10.6M3.7 10.3H10.6M6.5 3.7H10.6" stroke-width="1"/></g></svg>
<div class="t" style="left:36.200000000000045px;top:11.2px;font-size:15.2px;color:#444;-webkit-text-stroke:.5px #444;letter-spacing:.1px;">未命名画布-1</div>
<div class="t" style="left:228px;top:11.3px;font-size:15.2px;color:#555;">未命名画布-2</div>
<div class="t" style="left:418.79999999999995px;top:11.3px;font-size:15.2px;color:#555;">未命名画布-3</div>
<div class="t" style="left:611px;top:11.3px;font-size:15.2px;color:#555;">未命名画布-4</div>
<div class="t" style="left:802px;top:11.3px;font-size:15.2px;color:#555;">未命名画布-1</div>
<svg class="abs" style="left:156px;top:14px" width="11" height="11" viewBox="0 0 11 11" ><path d="M1 1l8.8 8.8M9.8 1L1 9.8" stroke="#555" stroke-width="1.1"/></svg>
<svg class="abs" style="left:965px;top:4.5px" width="22" height="22" viewBox="0 0 22 22" ><circle cx="11" cy="11" r="9.4" fill="none" stroke="#8a8a8a" stroke-width="1.2"/><path d="M6.4 11H15.6M11 6.4V15.6" stroke="#8a8a8a" stroke-width="1.2"/></svg>
</div>
<div id="canvas"><svg class="abs" style="left:0;top:0" width="1082" height="790" viewBox="0 0 1082 790" font-family="Liberation Sans, Noto Sans CJK SC, sans-serif"><path d="M22.25 0V790M58.15 0V790M94.04 0V790M129.94 0V790M165.84 0V790M201.74 0V790M237.63 0V790M273.53 0V790M309.43 0V790M345.32 0V790M381.22 0V790M417.12 0V790M453.01 0V790M488.91 0V790M524.81 0V790M560.71 0V790M596.60 0V790M632.50 0V790M668.40 0V790M704.29 0V790M740.19 0V790M776.09 0V790M811.98 0V790M847.88 0V790M883.78 0V790M919.67 0V790M955.57 0V790M991.47 0V790M1027.37 0V790M1063.26 0V790M0 47.15H1082M0 98.39H1082M0 149.64H1082M0 200.88H1082M0 252.13H1082M0 303.38H1082M0 354.62H1082M0 405.87H1082M0 457.11H1082M0 508.36H1082M0 559.60H1082M0 610.85H1082M0 662.09H1082M0 713.34H1082M0 764.58H1082" stroke="#d0d0d0" stroke-width="1.2" fill="none"/><g font-size="12.8" font-weight="bold" fill="#b4460f" text-anchor="middle"><text x="33.1" y="17.30000000000001">6</text><text x="33.1" y="32.30000000000001">周</text><text x="69.0" y="17.30000000000001">7</text><text x="69.0" y="32.30000000000001">周</text><text x="104.9" y="17.30000000000001">8</text><text x="104.9" y="32.30000000000001">周</text><text x="140.8" y="17.30000000000001">9</text><text x="140.8" y="32.30000000000001">周</text><text x="176.7" y="17.30000000000001">10</text><text x="176.7" y="32.30000000000001">周</text><text x="212.6" y="17.30000000000001">11</text><text x="212.6" y="32.30000000000001">周</text><text x="248.5" y="17.30000000000001">12</text><text x="248.5" y="32.30000000000001">周</text><text x="284.4" y="17.30000000000001">13</text><text x="284.4" y="32.30000000000001">周</text><text x="320.3" y="17.30000000000001">14</text><text x="320.3" y="32.30000000000001">周</text><text x="356.2" y="17.30000000000001">15</text><text x="356.2" y="32.30000000000001">周</text><text x="392.1" y="17.30000000000001">16</text><text x="392.1" y="32.30000000000001">周</text><text x="428.0" y="17.30000000000001">17</text><text x="428.0" y="32.30000000000001">周</text><text x="463.9" y="17.30000000000001">18</text><text x="463.9" y="32.30000000000001">周</text><text x="499.8" y="17.30000000000001">19</text><text x="499.8" y="32.30000000000001">周</text><text x="535.7" y="17.30000000000001">20</text><text x="535.7" y="32.30000000000001">周</text><text x="571.6" y="17.30000000000001">21</text><text x="571.6" y="32.30000000000001">周</text><text x="607.5" y="17.30000000000001">22</text><text x="607.5" y="32.30000000000001">周</text><text x="643.4" y="17.30000000000001">23</text><text x="643.4" y="32.30000000000001">周</text><text x="679.3" y="17.30000000000001">24</text><text x="679.3" y="32.30000000000001">周</text><text x="715.2" y="17.30000000000001">25</text><text x="715.2" y="32.30000000000001">周</text><text x="751.1" y="17.30000000000001">26</text><text x="751.1" y="32.30000000000001">周</text><text x="787.0" y="17.30000000000001">27</text><text x="787.0" y="32.30000000000001">周</text><text x="822.9" y="17.30000000000001">28</text><text x="822.9" y="32.30000000000001">周</text><text x="858.8" y="17.30000000000001">29</text><text x="858.8" y="32.30000000000001">周</text><text x="894.7" y="17.30000000000001">30</text><text x="894.7" y="32.30000000000001">周</text><text x="930.6" y="17.30000000000001">31</text><text x="930.6" y="32.30000000000001">周</text><text x="966.5" y="17.30000000000001">32</text><text x="966.5" y="32.30000000000001">周</text><text x="1002.4" y="17.30000000000001">33</text><text x="1002.4" y="32.30000000000001">周</text><text x="1038.3" y="17.30000000000001">34</text><text x="1038.3" y="32.30000000000001">周</text><text x="1074.2" y="17.30000000000001">35</text><text x="1074.2" y="32.30000000000001">周</text></g><rect x="162.00" y="60.90" width="51.48" height="18.50" fill="#e4f0fc" stroke="#1f6bb8" stroke-width="2.4"/><rect x="160.80" y="63.90" width="33.73" height="12.8" fill="#00cc00"/><text x="160.80" y="93.30" font-size="11.5" fill="#333" letter-spacing=".45">21-3-8</text><text x="196.30" y="93.30" font-size="11.5" fill="#333" letter-spacing=".45">21-3-18</text><text x="251.3" y="83.20" font-size="15.36"><tspan fill="#222" font-size="15.07">门窗窗框安装</tspan><tspan fill="#22aa22" stroke="#22aa22" stroke-width=".25" font-size="15.2">(进度：60%)</tspan><tspan fill="#111" stroke="#111" stroke-width=".5" letter-spacing=".8">--张三</tspan></text><rect x="162.00" y="112.14" width="102.76" height="18.50" fill="#e4f0fc" stroke="#1f6bb8" stroke-width="2.4"/><rect x="160.80" y="115.14" width="43.47" height="12.8" fill="#00cc00"/><text x="160.80" y="144.55" font-size="11.5" fill="#333" letter-spacing=".45">21-3-8</text><text x="247.50" y="144.55" font-size="11.5" fill="#333" letter-spacing=".45">21-3-28</text><text x="302.5" y="134.44" font-size="15.36"><tspan fill="#222" font-size="15.07">门窗窗扇安装</tspan><tspan fill="#22aa22" stroke="#22aa22" stroke-width=".25" font-size="15.2">(进度：40%)</tspan><tspan fill="#111" stroke="#111" stroke-width=".5" letter-spacing=".8">--张三</tspan></text><rect x="213.28" y="163.39" width="210.45" height="18.50" fill="#e4f0fc" stroke="#1f6bb8" stroke-width="2.4"/><rect x="212.08" y="166.39" width="129.11" height="12.8" fill="#00cc00"/><text x="212.08" y="195.79" font-size="11.5" fill="#333" letter-spacing=".45">21-3-18</text><text x="409.80" y="195.79" font-size="11.5" fill="#333" letter-spacing=".45">21-4-28</text><text x="464.3" y="185.69" font-size="15.36"><tspan fill="#222" font-size="15.07">栏杆安装</tspan><tspan fill="#22aa22" stroke="#22aa22" stroke-width=".25" font-size="15.2">(进度：60%)</tspan><tspan fill="#111" stroke="#111" stroke-width=".5" letter-spacing=".8">--李四</tspan></text><rect x="162.00" y="214.63" width="261.74" height="18.50" fill="#e4f0fc" stroke="#1f6bb8" stroke-width="2.4"/><rect x="160.80" y="217.63" width="2.20" height="12.8" fill="#00cc00"/><text x="160.80" y="247.03" font-size="11.5" fill="#333" letter-spacing=".45">21-3-8</text><text x="406.70" y="247.03" font-size="11.5" fill="#333" letter-spacing=".45">21-4-28</text><text x="461.0" y="236.93" font-size="15.36"><tspan fill="#222" font-size="15.07">配电箱</tspan><tspan fill="#22aa22" stroke="#22aa22" stroke-width=".25" font-size="15.2">(进度：0%)</tspan><tspan fill="#111" stroke="#111" stroke-width=".5" letter-spacing=".8">--王五</tspan></text><rect x="162.00" y="265.88" width="266.86" height="18.50" fill="#e4f0fc" stroke="#1f6bb8" stroke-width="2.4"/><rect x="160.80" y="268.88" width="2.20" height="12.8" fill="#00cc00"/><text x="160.80" y="298.28" font-size="11.5" fill="#333" letter-spacing=".45">21-3-8</text><text x="411.80" y="298.28" font-size="11.5" fill="#333" letter-spacing=".45">21-4-29</text><text x="466.6" y="288.18" font-size="15.36"><tspan fill="#222" font-size="15.07">电器元器件</tspan><tspan fill="#22aa22" stroke="#22aa22" stroke-width=".25" font-size="15.2">(进度：0%)</tspan><tspan fill="#111" stroke="#111" stroke-width=".5" letter-spacing=".8">--王五</tspan></text><rect x="433.79" y="317.12" width="154.04" height="18.50" fill="#e4f0fc" stroke="#1f6bb8" stroke-width="2.4"/><rect x="432.59" y="320.12" width="2.20" height="12.8" fill="#00cc00"/><text x="432.59" y="349.52" font-size="11.5" fill="#333" letter-spacing=".45">21-4-30</text><text x="574.40" y="349.52" font-size="11.5" fill="#333" letter-spacing=".45">21-5-30</text><text x="628.6" y="339.42" font-size="15.36"><tspan fill="#222" font-size="15.07">消防管线安装</tspan><tspan fill="#22aa22" stroke="#22aa22" stroke-width=".25" font-size="15.2">(进度：0%)</tspan><tspan fill="#111" stroke="#111" stroke-width=".5" letter-spacing=".8">--王五</tspan></text><rect x="362.00" y="368.37" width="77.12" height="18.50" fill="#e4f0fc" stroke="#1f6bb8" stroke-width="2.4"/><rect x="360.80" y="371.37" width="2.20" height="12.8" fill="#00cc00"/><text x="360.80" y="400.77" font-size="11.5" fill="#333" letter-spacing=".45">21-4-16</text><text x="428.70" y="400.77" font-size="11.5" fill="#333" letter-spacing=".45">21-5-1</text><text x="476.6" y="390.67" font-size="15.36"><tspan fill="#222" font-size="15.07">智能化安装</tspan><tspan fill="#22aa22" stroke="#22aa22" stroke-width=".25" font-size="15.2">(进度：0%)</tspan><tspan fill="#111" stroke="#111" stroke-width=".5" letter-spacing=".8">--测试员M</tspan></text><rect x="474.82" y="419.62" width="61.74" height="18.50" fill="#e4f0fc" stroke="#1f6bb8" stroke-width="2.4"/><rect x="473.62" y="422.62" width="2.20" height="12.8" fill="#00cc00"/><text x="473.62" y="452.01" font-size="11.5" fill="#333" letter-spacing=".45">21-5-8</text><text x="519.60" y="452.01" font-size="11.5" fill="#333" letter-spacing=".45">21-5-20</text><text x="574.2" y="441.91" font-size="15.36"><tspan fill="#222" font-size="15.07">电梯</tspan><tspan fill="#22aa22" stroke="#22aa22" stroke-width=".25" font-size="15.2">(进度：0%)</tspan><tspan fill="#111" stroke="#111" stroke-width=".5" letter-spacing=".8">--测试员M</tspan></text><rect x="474.82" y="470.86" width="230.97" height="18.50" fill="#e4f0fc" stroke="#1f6bb8" stroke-width="2.4"/><rect x="473.62" y="473.86" width="2.20" height="12.8" fill="#00cc00"/><text x="473.62" y="503.26" font-size="11.5" fill="#333" letter-spacing=".45">21-5-8</text><text x="689.00" y="503.26" font-size="11.5" fill="#333" letter-spacing=".45">21-6-22</text><text x="743.4" y="493.16" font-size="15.36"><tspan fill="#222" font-size="15.07">防火门</tspan><tspan fill="#22aa22" stroke="#22aa22" stroke-width=".25" font-size="15.2">(进度：0%)</tspan><tspan fill="#111" stroke="#111" stroke-width=".5" letter-spacing=".8">--测试员M</tspan></text></svg></div>
<div class="abs" style="left:1611px;top:110px;width:129px;height:30.6px;background:#fff;border-top:1px solid #a9a9a9;border-bottom:1px solid #b5b5b5"></div>
<svg class="abs" style="left:1575px;top:100px" width="165" height="50" viewBox="1575 100 165 50" ><defs><linearGradient id="sg" x1="0" y1="0" x2="0" y2="1"><stop offset="0" stop-color="#f6763a"/><stop offset="1" stop-color="#e8551a"/></linearGradient></defs><g transform="translate(1600,124) rotate(-15)"><rect x="-15.3" y="-13.6" width="30.6" height="27.2" rx="3.2" fill="url(#sg)"/><path d="M10.4 -6.4C6.5 -9.8 -3.2 -10 -8.2 -6.6C-12.4 -3.6 -9.6 0.2 -3.6 1.2C1.4 2 5 2.4 4.6 4C4 6 -4.6 6.4 -10.6 3.6L-11.6 7.4C-5.6 10.8 6.4 10.6 10.4 6.4C13.4 3 11 -0.8 4.4 -2C-0.8 -2.9 -4.2 -3 -3.6 -4.6C-2.8 -6.4 4 -6.6 8.6 -3.4Z" fill="#fff"/></g><circle cx="1657" cy="123.8" r="2.3" fill="none" stroke="#2878c8" stroke-width="1.5"/><path d="M1664.1 127a1.9 1.9 0 1 1 3.2 1.4c0 2.6-1.6 4.6-4.6 5.6 1.6-1.2 2.4-2.6 2.2-4.4a1.9 1.9 0 0 1-.8-2.6z" fill="#2878c8"/><circle cx="1687.2" cy="126.7" r="9.2" fill="none" stroke="#2878c8" stroke-width="2"/><path d="M1684.1 122.4V125.4M1690.3 122.4V125.4" stroke="#2878c8" stroke-width="1.9" stroke-linecap="round"/><path d="M1682.4 128.8c1.2 2 3 2.7 4.8 2.7s3.6-.7 4.8-2.7" fill="none" stroke="#2878c8" stroke-width="1.6" stroke-linecap="round"/><rect x="1711.3" y="116" width="8.2" height="14.4" rx="4.1" fill="#2878c8"/><path d="M1708.6 125.6c0 4 3 6.6 6.8 6.6s6.8-2.6 6.8-6.6" fill="none" stroke="#2878c8" stroke-width="1.7"/><path d="M1715.4 132V135.6M1711.4 135.8H1719.4" stroke="#2878c8" stroke-width="1.8"/><rect x="1732.6" y="120.4" width="14" height="13" rx="1.5" fill="none" stroke="#2878c8" stroke-width="2"/><path d="M1737.4 120.4V133.4M1732.6 124.8H1746M1732.6 129H1746" stroke="#2878c8" stroke-width="1.6"/></svg>
<div class="t" style="left:1623.1px;top:117.3px;font-size:20.4px;font-weight:bold;color:#2878c8;-webkit-text-stroke:.3px #2878c8;transform:scaleY(.9);transform-origin:50% 50%">中</div>
<svg class="abs" style="left:1555px;top:860px" width="185" height="102" viewBox="1555 860 185 102" ><path d="M1561.5 962V864.5H1740" fill="none" stroke="#a9abab" stroke-width="3"/><path d="M1565.82 867V962M1572.11 867V962M1578.39 867V962M1584.67 867V962M1590.95 867V962M1597.23 867V962M1603.52 867V962M1609.80 867V962M1616.08 867V962M1622.36 867V962M1628.64 867V962M1634.93 867V962M1641.21 867V962M1647.49 867V962M1653.77 867V962M1660.05 867V962M1666.34 867V962M1672.62 867V962M1678.90 867V962M1685.18 867V962M1691.46 867V962M1697.75 867V962M1704.03 867V962M1710.31 867V962M1716.59 867V962M1722.87 867V962M1729.16 867V962M1735.44 867V962M1564 871.57H1740M1564 880.54H1740M1564 889.50H1740M1564 898.47H1740M1564 907.44H1740M1564 916.41H1740M1564 925.38H1740M1564 934.34H1740M1564 943.31H1740M1564 952.28H1740M1564 961.25H1740" stroke="#f3f3f3" stroke-width=".6" stroke-dasharray="1 1" fill="none"/><path d="M1566 885.3H1740" stroke="#a8a29c" stroke-width=".6" stroke-dasharray="2.2 4.08"/><rect x="1590.30" y="892.00" width="8.83" height="3.06" rx=".8" fill="#dcebfa" stroke="#8fb6e0" stroke-width=".6"/><rect x="1590.00" y="892.44" width="5.90" height="2.24" fill="#1db41d"/><path d="M1590.00 896.86h6.72M1596.28 896.86h7.84" stroke="#c9c9c9" stroke-width=".7"/><path d="M1605.91 894.85h15.82" stroke="#bdbdbd" stroke-width=".7"/><path d="M1621.73 894.85h15.17" stroke="#cfe3cf" stroke-width=".7"/><path d="M1636.90 894.85h7.18" stroke="#b5b5b5" stroke-width=".8"/><rect x="1590.30" y="900.97" width="17.80" height="3.06" rx=".8" fill="#dcebfa" stroke="#8fb6e0" stroke-width=".6"/><rect x="1590.00" y="901.40" width="7.61" height="2.24" fill="#1db41d"/><path d="M1590.00 905.83h6.72M1605.24 905.83h7.84" stroke="#c9c9c9" stroke-width=".7"/><path d="M1614.87 903.82h15.82" stroke="#bdbdbd" stroke-width=".7"/><path d="M1630.69 903.82h15.17" stroke="#cfe3cf" stroke-width=".7"/><path d="M1645.86 903.82h7.18" stroke="#b5b5b5" stroke-width=".8"/><rect x="1599.27" y="909.94" width="36.65" height="3.06" rx=".8" fill="#dcebfa" stroke="#8fb6e0" stroke-width=".6"/><rect x="1598.97" y="910.37" width="22.59" height="2.24" fill="#1db41d"/><path d="M1598.97 914.80h6.72M1633.64 914.80h7.84" stroke="#c9c9c9" stroke-width=".7"/><path d="M1643.18 912.79h10.55" stroke="#bdbdbd" stroke-width=".7"/><path d="M1653.73 912.79h15.17" stroke="#cfe3cf" stroke-width=".7"/><path d="M1668.90 912.79h7.18" stroke="#b5b5b5" stroke-width=".8"/><rect x="1590.30" y="918.90" width="45.62" height="3.06" rx=".8" fill="#dcebfa" stroke="#8fb6e0" stroke-width=".6"/><rect x="1590.00" y="919.34" width="0.45" height="2.24" fill="#1db41d"/><path d="M1590.00 923.77h6.72M1633.10 923.77h7.84" stroke="#c9c9c9" stroke-width=".7"/><path d="M1642.61 921.75h7.91" stroke="#bdbdbd" stroke-width=".7"/><path d="M1650.52 921.75h13.69" stroke="#cfe3cf" stroke-width=".7"/><path d="M1664.21 921.75h7.18" stroke="#b5b5b5" stroke-width=".8"/><rect x="1590.30" y="927.87" width="46.52" height="3.06" rx=".8" fill="#dcebfa" stroke="#8fb6e0" stroke-width=".6"/><rect x="1590.00" y="928.31" width="0.45" height="2.24" fill="#1db41d"/><path d="M1590.00 932.73h6.72M1633.99 932.73h7.84" stroke="#c9c9c9" stroke-width=".7"/><path d="M1643.59 930.72h13.19" stroke="#bdbdbd" stroke-width=".7"/><path d="M1656.77 930.72h13.69" stroke="#cfe3cf" stroke-width=".7"/><path d="M1670.46 930.72h7.18" stroke="#b5b5b5" stroke-width=".8"/><rect x="1637.86" y="936.84" width="26.78" height="3.06" rx=".8" fill="#dcebfa" stroke="#8fb6e0" stroke-width=".6"/><rect x="1637.56" y="937.27" width="0.45" height="2.24" fill="#1db41d"/><path d="M1637.56 941.70h6.72M1662.45 941.70h7.84" stroke="#c9c9c9" stroke-width=".7"/><path d="M1671.93 939.69h15.82" stroke="#bdbdbd" stroke-width=".7"/><path d="M1687.76 939.69h13.69" stroke="#cfe3cf" stroke-width=".7"/><path d="M1701.45 939.69h7.18" stroke="#b5b5b5" stroke-width=".8"/><rect x="1625.30" y="945.81" width="13.32" height="3.06" rx=".8" fill="#dcebfa" stroke="#8fb6e0" stroke-width=".6"/><rect x="1625.00" y="946.24" width="0.45" height="2.24" fill="#1db41d"/><path d="M1625.00 950.67h6.72M1636.95 950.67h7.84" stroke="#c9c9c9" stroke-width=".7"/><path d="M1645.34 948.66h13.19" stroke="#bdbdbd" stroke-width=".7"/><path d="M1658.52 948.66h13.69" stroke="#cfe3cf" stroke-width=".7"/><path d="M1672.21 948.66h12.10" stroke="#b5b5b5" stroke-width=".8"/><rect x="1645.04" y="954.78" width="10.62" height="3.06" rx=".8" fill="#dcebfa" stroke="#8fb6e0" stroke-width=".6"/><rect x="1644.74" y="955.21" width="0.45" height="2.24" fill="#1db41d"/><path d="M1644.74 959.64h6.72M1652.86 959.64h7.84" stroke="#c9c9c9" stroke-width=".7"/><path d="M1662.41 957.63h5.27" stroke="#bdbdbd" stroke-width=".7"/><path d="M1667.69 957.63h13.69" stroke="#cfe3cf" stroke-width=".7"/><path d="M1681.38 957.63h12.10" stroke="#b5b5b5" stroke-width=".8"/><rect x="1645.04" y="963.74" width="40.24" height="3.06" rx=".8" fill="#dcebfa" stroke="#8fb6e0" stroke-width=".6"/><rect x="1644.74" y="964.18" width="0.45" height="2.24" fill="#1db41d"/><path d="M1644.74 968.61h6.72M1682.51 968.61h7.84" stroke="#c9c9c9" stroke-width=".7"/><path d="M1692.03 966.59h7.91" stroke="#bdbdbd" stroke-width=".7"/><path d="M1699.94 966.59h13.69" stroke="#cfe3cf" stroke-width=".7"/><path d="M1713.63 966.59h12.10" stroke="#b5b5b5" stroke-width=".8"/><rect x="1712.5" y="953.2" width="40" height="20" fill="#fff" stroke="#c4c4c4" stroke-width=".8"/><path d="M1564 962V881.4H1740" fill="none" stroke="#ff22f0" stroke-width="2.6"/></svg>
</body></html>
